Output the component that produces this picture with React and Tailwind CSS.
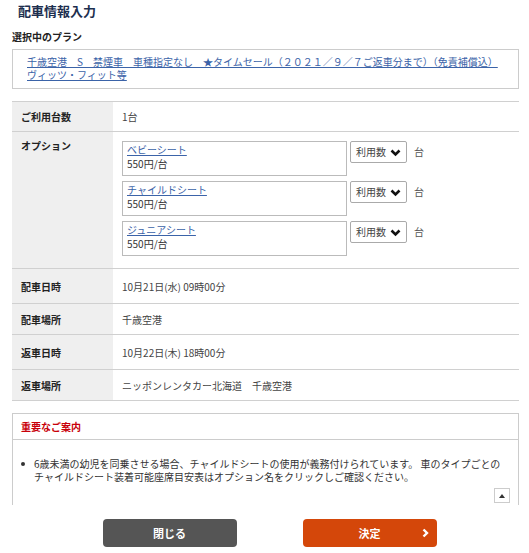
import React from "react";

const font = { fontFamily: '"Noto Sans CJK JP", "Noto Sans", sans-serif' };

function Chevron() {
  return (
    <svg width="11" height="8" viewBox="0 0 11 8" className="absolute right-[5px] top-[7px] pointer-events-none">
      <polyline points="1.5,1.5 5.5,5.5 9.5,1.5" fill="none" stroke="#111" strokeWidth="2.6" />
    </svg>
  );
}

function OptionRow({ name }) {
  return (
    <div className="flex items-start">
      <div className="w-[225px] h-[35px] border border-[#bbb] px-[4px] pt-[1px] leading-[13px]">
        <a href="#" className="block text-[#3b63a8] underline text-[10px] leading-[14px]">{name}</a>
        <div className="text-[10px] leading-[13px] text-[#333]">550円/台</div>
      </div>
      <div className="relative ml-[3px] w-[57px] h-[22px] border border-[#aaa] rounded-[2px] bg-white">
        <span className="absolute left-[5px] top-[3px] text-[10px] leading-[14px] text-[#444]">利用数</span>
        <Chevron />
      </div>
      <span className="ml-[7px] mt-[4px] text-[10px] leading-[14px] text-[#555]">台</span>
    </div>
  );
}

function Row({ label, children, h, top = false }) {
  return (
    <div className={`flex border-b border-[#d0d0d0] ${h}`}>
      <div className={`w-[101px] bg-[#efefef] pl-[9px] text-[10px] font-bold text-[#222] flex ${top ? "items-start pt-[6px]" : "items-center"}`}>
        {label}
      </div>
      <div className={`flex-1 pl-[9px] text-[10px] text-[#444] flex ${top ? "flex-col gap-[5px] pt-[9px]" : "items-center"}`}>
        {children}
      </div>
    </div>
  );
}

export default function App() {
  return (
    <div className="w-[529px] h-[553px] bg-white overflow-hidden" style={font}>
      <div className="pl-[12px] w-[519px]">
        <h1 className="pl-[6px] pt-[2px] text-[13px] leading-[18px] font-bold text-[#1d2f4f]">配車情報入力</h1>
        <div className="mt-[10px] text-[10px] leading-[14px] font-bold text-[#222]">選択中のプラン</div>
        <div className="mt-[5px] h-[40px] border border-[#ccc] pl-[14px] pt-[5px] text-[10px] leading-[13px]">
          <a href="#" className="text-[#3b63a8] underline">
            千歳空港　S　禁煙車　車種指定なし　★タイムセール（２０２１／９／７ご返車分まで）（免責補償込）<br />ヴィッツ・フィット等
          </a>
        </div>
        <div className="mt-[12px] border-t border-[#d0d0d0]">
          <Row label="ご利用台数" h="h-[30px]">1台</Row>
          <Row label="オプション" h="h-[137px]" top>
            <OptionRow name="ベビーシート" />
            <OptionRow name="チャイルドシート" />
            <OptionRow name="ジュニアシート" />
          </Row>
          <Row label="配車日時" h="h-[35px]">10月21日(水) 09時00分</Row>
          <Row label="配車場所" h="h-[31px]">千歳空港</Row>
          <Row label="返車日時" h="h-[35px]">10月22日(木) 18時00分</Row>
          <Row label="返車場所" h="h-[31px]">ニッポンレンタカー北海道　千歳空港</Row>
        </div>
        <div className="mt-[12px] h-[92px] border-x border-t border-[#ccc] flex flex-col">
          <div className="h-[26px] border-b border-[#ccc] pl-[8px] flex items-center text-[10px] font-bold text-[#c8000a]">重要なご案内</div>
          <div className="relative flex-1 overflow-hidden">
            <div className="flex pl-[8px] pt-[17px] text-[10px] leading-[13px] text-[#333]">
              <span className="w-[13px] shrink-0 flex pt-[5px]">
                <span className="block w-[4px] h-[4px] rounded-full bg-[#333]" />
              </span>
              <span className="pr-[8px]">6歳未満の幼児を同乗させる場合、チャイルドシートの使用が義務付けられています。 車のタイプごとのチャイルドシート装着可能座席目安表はオプション名をクリックしご確認ください。</span>
            </div>
            <div className="absolute right-[8px] bottom-[2px] w-[16px] h-[15px] border border-[#ccc] bg-white flex items-center justify-center">
              <svg width="6" height="4" viewBox="0 0 6 4"><polygon points="3,0 6,4 0,4" fill="#333" /></svg>
            </div>
          </div>
        </div>
      </div>
      <div className="mt-[14px] flex justify-center gap-[66px] pl-[10px]">
        <button className="w-[134px] h-[28px] rounded-[4px] bg-[#555555] text-white text-[11px] font-bold">閉じる</button>
        <button className="relative w-[134px] h-[28px] rounded-[4px] bg-[#d4470a] text-white text-[11px] font-bold">
          決定
          <svg width="7" height="10" viewBox="0 0 7 10" className="absolute right-[8px] top-[9px]">
            <polyline points="1.5,1.5 5,5 1.5,8.5" fill="none" stroke="#fff" strokeWidth="2.4" />
          </svg>
        </button>
      </div>
    </div>
  );
}
